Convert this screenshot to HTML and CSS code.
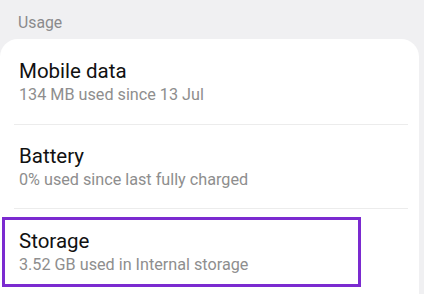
FILE: index.html
```html
<!DOCTYPE html>
<html lang="en">
<head>
    <meta charset="UTF-8">
    <meta name="viewport" content="width=device-width, initial-scale=1.0">
    <title>Usage</title>
    <link rel="stylesheet" href="styles.css">
</head>
<body>
    <h2 class="section-title">Usage</h2>

    <section class="card">
        <div class="item">
            <div class="item-title">Mobile data</div>
            <div class="item-sub">134 MB used since 13 Jul</div>
        </div>
        <hr class="divider">
        <div class="item item-battery">
            <div class="item-title">Battery</div>
            <div class="item-sub">0% used since last fully charged</div>
        </div>
        <hr class="divider">
        <div class="item item-selected">
            <div class="item-title">Storage</div>
            <div class="item-sub">3.52 GB used in Internal storage</div>
        </div>
    </section>
</body>
</html>
```

FILE: styles.css
```css
/* Reset */
* {
    margin: 0;
    padding: 0;
    box-sizing: border-box;
}

body {
    font-family: 'Roboto', 'Noto Sans', sans-serif;
    background-color: #f0f0f2;
    color: #111;
    height: 294px;
    overflow: hidden;
}

/* Section header */
.section-title {
    font-size: 15.8px;
    font-weight: 400;
    line-height: 20px;
    color: #8a8a8c;
    padding: 13px 0 0 18px;
}

/* Card */
.card {
    margin: 6px 5px 0 0;
    background-color: #fff;
    border-radius: 18px 18px 0 0;
    height: 260px;
}

.item {
    padding: 19px 0 18px 19px;
}

.item-battery {
    padding: 18px 0 17px 19px;
}

.item-title {
    font-size: 20.5px;
    line-height: 26px;
    color: #111;
}

.item-sub {
    font-size: 16.2px;
    line-height: 22px;
    color: #8e8e8e;
}

.divider {
    border: none;
    height: 1px;
    background-color: #ececec;
    margin: 0 11px 0 14px;
}

/* Highlighted row */
.item-selected {
    margin: 8px 0 0 2px;
    width: 359px;
    border: 3px solid #7b2ad0;
    padding: 8px 0 8px 14px;
}
```
